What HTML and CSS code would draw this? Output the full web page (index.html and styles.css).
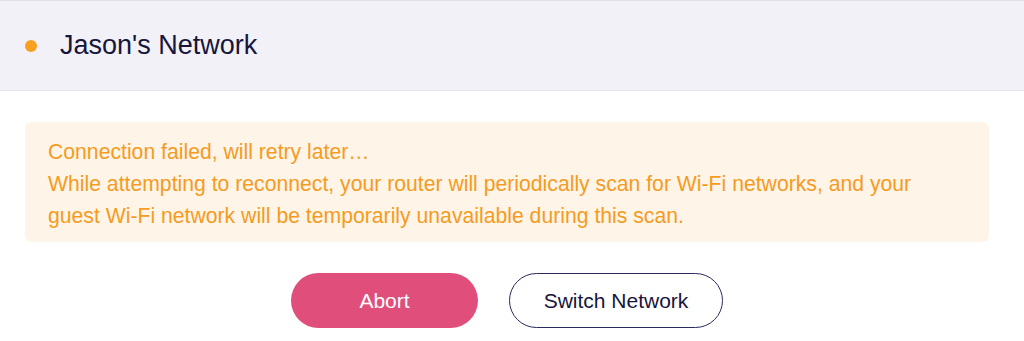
FILE: index.html
```html
<!DOCTYPE html>
<html>
<head>
<meta charset="utf-8">
<link rel="stylesheet" href="styles.css">
</head>
<body>
<div class="page">
  <header class="header">
    <span class="dot"></span>
    <h1 class="title">Jason's Network</h1>
  </header>
  <main class="content">
    <div class="alert">
      <p>Connection failed, will retry later…</p>
      <p>While attempting to reconnect, your router will periodically scan for Wi-Fi networks, and your guest Wi-Fi network will be temporarily unavailable during this scan.</p>
    </div>
    <div class="actions">
      <button class="btn btn-primary">Abort</button>
      <button class="btn btn-outline">Switch Network</button>
    </div>
  </main>
</div>
</body>
</html>
```

FILE: styles.css
```css
* { box-sizing: border-box; }
html, body { margin: 0; padding: 0; background: #ffffff; }
body { font-family: "Liberation Sans", Arial, sans-serif; }
.page { width: 1024px; }
.header {
  height: 91px;
  background: #f2f1f7;
  border-top: 1px solid #e2e1e8;
  border-bottom: 1px solid #e6e5ec;
  display: flex;
  align-items: center;
  padding-left: 25px;
}
.dot {
  width: 12px;
  height: 12px;
  border-radius: 50%;
  background: #f9a021;
  flex: none;
}
.title {
  margin: 0 0 0 23px;
  font-size: 27px;
  font-weight: 400;
  color: #17163b;
}
.content {
  padding: 31px 35px 0 25px;
}
.alert {
  background: #fef5e8;
  border-radius: 6px;
  padding: 14px 23px 10px;
  color: #f59b1f;
  font-size: 21.2px;
  line-height: 32px;
}
.alert p { margin: 0; }
.actions {
  display: flex;
  justify-content: center;
  gap: 31px;
  margin-top: 31px;
}
.btn {
  height: 55px;
  border-radius: 28px;
  font-family: "Liberation Sans", Arial, sans-serif;
  font-size: 21px;
  cursor: pointer;
}
.btn-primary {
  width: 187px;
  background: #e04e7c;
  border: none;
  color: #ffffff;
}
.btn-outline {
  width: 214px;
  background: #ffffff;
  border: 1px solid #2b2a5e;
  color: #17163b;
}
```
